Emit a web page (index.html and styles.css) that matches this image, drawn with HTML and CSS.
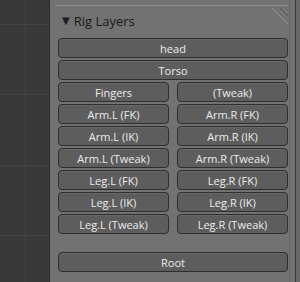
FILE: index.html
```html
<!doctype html>
<html lang="en">
	<head>
		<meta charset="UTF-8">
		<title>Rig Layers</title>
		<link rel="stylesheet" href="styles.css">
	</head>
	<body>
		<div class="view"></div>
		<div class="region">
			<div class="panel">
				<div class="header">
					<span class="arrow">&#9660;</span>
					<span class="title">Rig Layers</span>
					<span class="grip"></span>
				</div>
				<div class="rows">
					<div class="row"><button class="btn">head</button></div>
					<div class="row"><button class="btn">Torso</button></div>
					<div class="row two"><button class="btn">Fingers</button><button class="btn">(Tweak)</button></div>
					<div class="row two"><button class="btn">Arm.L (FK)</button><button class="btn">Arm.R (FK)</button></div>
					<div class="row two"><button class="btn">Arm.L (IK)</button><button class="btn">Arm.R (IK)</button></div>
					<div class="row two"><button class="btn">Arm.L (Tweak)</button><button class="btn">Arm.R (Tweak)</button></div>
					<div class="row two"><button class="btn">Leg.L (FK)</button><button class="btn">Leg.R (FK)</button></div>
					<div class="row two"><button class="btn">Leg.L (IK)</button><button class="btn">Leg.R (IK)</button></div>
					<div class="row two"><button class="btn">Leg.L (Tweak)</button><button class="btn">Leg.R (Tweak)</button></div>
					<div class="row root"><button class="btn">Root</button></div>
				</div>
			</div>
			<div class="scroll"><div class="thumb"></div></div>
		</div>
	</body>
</html>
```

FILE: styles.css
```css
* {
	box-sizing: border-box;
}
html, body {
	margin: 0;
	height: 100%;
}
body {
	display: flex;
	background-color: #393939;
	font-family: "Open Sans", "DejaVu Sans", sans-serif;
	overflow: hidden;
}
.view {
	width: 49px;
	background-color: #393939;
	background-image:
		linear-gradient(#434343, #434343),
		linear-gradient(#434343, #434343),
		linear-gradient(#434343, #434343),
		linear-gradient(#434343, #434343),
		linear-gradient(#434343, #434343);
	background-size: 1px 100%, 100% 1px, 100% 1px, 100% 1px, 100% 1px;
	background-position: 25px 0, 0 24px, 0 94px, 0 165px, 0 235px;
	background-repeat: no-repeat;
}
.region {
	flex: 1;
	display: flex;
	background-color: #727272;
	border-left: 1px solid #2c2c2c;
}
.panel {
	flex: 1;
	padding: 0 1px 0 8px;
}
.header {
	display: flex;
	align-items: center;
	height: 33px;
	margin: 5px 0 0 -3px;
	padding: 0 0 0 7px;
	border-top: 1px solid #8a8a8a;
	color: #1a1a1a;
	position: relative;
}
.arrow {
	font-family: "DejaVu Sans", sans-serif;
	font-size: 10px;
	margin-right: 4px;
	padding-bottom: 3px;
}
.title {
	font-size: 13px;
	padding-bottom: 3px;
}
.grip {
	position: absolute;
	right: 0;
	top: 2px;
	width: 18px;
	height: 18px;
	background: repeating-linear-gradient(45deg, transparent 0 2px, #8c8c8c 2px 3px, #5c5c5c 3px 4px);
	clip-path: polygon(0 0, 100% 0, 100% 100%);
}
.rows {
	display: flex;
	flex-direction: column;
	gap: 2px;
}
.row {
	display: flex;
	gap: 8px;
}
.row.root {
	margin-top: 16px;
}
.btn {
	flex: 1;
	height: 20px;
	padding: 0;
	font-family: "Open Sans", "DejaVu Sans", sans-serif;
	font-size: 11px;
	color: #ececec;
	background-color: #5d5d5d;
	border: 1px solid #2e2e2e;
	border-radius: 4px;
	box-shadow: inset 0 1px 0 #676767;
}
.scroll {
	width: 11px;
	border-left: 1px solid #6a6a6a;
	display: flex;
	justify-content: flex-end;
}
.thumb {
	width: 5px;
	height: 100%;
	border-left: 1px solid #3a3a3a;
	background-color: #686868;
}
```
